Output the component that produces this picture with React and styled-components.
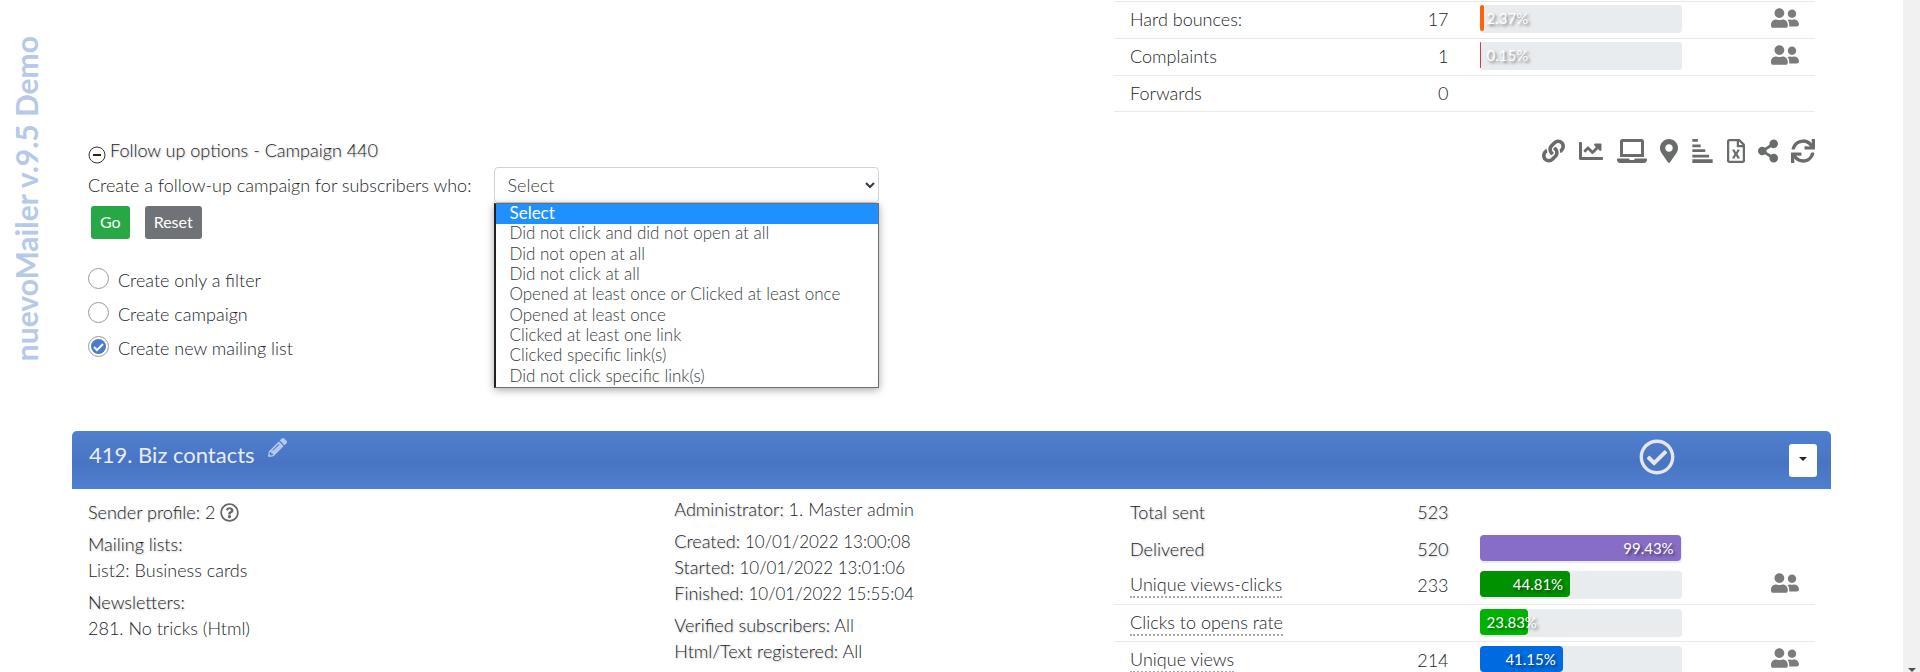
import React, { useState } from 'react';
import styled, { createGlobalStyle } from 'styled-components';
import {
  FaChartLine,
  FaLaptop,
  FaLink,
  FaMapMarkerAlt,
  FaPencilAlt,
  FaRegCheckCircle,
  FaRegFileExcel,
  FaRegQuestionCircle,
  FaShareAlt,
  FaSync,
  FaUserFriends,
} from 'react-icons/fa';

const FOLLOW_UP_OPTIONS = [
  'Select',
  'Did not click and did not open at all',
  'Did not open at all',
  'Did not click at all',
  'Opened at least once or Clicked at least once',
  'Opened at least once',
  'Clicked at least one link',
  'Clicked specific link(s)',
  'Did not click specific link(s)',
];

const CREATE_OPTIONS = ['Create only a filter', 'Create campaign', 'Create new mailing list'];

const BOUNCE_ROWS = [
  { label: 'Hard bounces:', count: 17, rate: 2.37, color: '#ff6209', users: true },
  { label: 'Complaints', count: 1, rate: 0.15, color: '#dc3545', users: true },
  { label: 'Forwards', count: 0 },
];

const BIZ_ROWS = [
  { label: 'Total sent', count: 523, shadow: true, plain: true },
  { label: 'Delivered', count: 520, shadow: true, plain: true, rate: 99.43, color: '#886dc6' },
  { label: 'Unique views-clicks', count: 233, hint: true, rate: 44.81, color: '#009100', users: true },
  { label: 'Clicks to opens rate', hint: true, rate: 23.83, color: '#00b300' },
  { label: 'Unique views', count: 214, hint: true, rate: 41.15, color: '#006be0', users: true },
];

function StepsIcon() {
  return (
    <svg viewBox="0 0 22 26" fill="currentColor">
      <path d="M0 0h6v3H0zM0 6h9v3H0zM0 11h14v3H0zM0 17h18v3H0zM0 22h22v4H0z" />
    </svg>
  );
}

const TOOLS = [
  { name: 'Links', icon: <FaLink />, width: 23 },
  { name: 'Chart', icon: <FaChartLine />, width: 26 },
  { name: 'Devices', icon: <FaLaptop />, width: 30 },
  { name: 'Locations', icon: <FaMapMarkerAlt />, width: 18 },
  { name: 'Breakdown', icon: <StepsIcon />, width: 23 },
  { name: 'Export', icon: <FaRegFileExcel />, width: 18 },
  { name: 'Share', icon: <FaShareAlt />, width: 20 },
  { name: 'Refresh', icon: <FaSync />, width: 24 },
];

function StatsTable({ rows, roomy }) {
  return (
    <Table $roomy={roomy}>
      <colgroup>
        <col width="34%" />
        <col width="16%" />
        <col width="33%" />
        <col width="17%" />
      </colgroup>
      <tbody>
        {rows.map((row) => (
          <Row key={row.label} $plain={row.plain} $shadow={row.shadow}>
            <td>{row.hint ? <Hint>{row.label}</Hint> : row.label}</td>
            <CountCell>{row.count}</CountCell>
            <BarCell>
              {row.rate !== undefined && (
                <Track>
                  <Fill $color={row.color} style={{ width: `${row.rate}%` }}>
                    <span>{`${row.rate}%`}</span>
                  </Fill>
                </Track>
              )}
            </BarCell>
            <UsersCell>
              {row.users && (
                <IconButton type="button" aria-label={`${row.label} subscribers`} $width={28} $color="#7b7b7b">
                  <FaUserFriends />
                </IconButton>
              )}
            </UsersCell>
          </Row>
        ))}
      </tbody>
    </Table>
  );
}

function FollowUp() {
  const [choice, setChoice] = useState('Select');
  const [create, setCreate] = useState('Create new mailing list');

  return (
    <FollowUpForm onSubmit={(e) => e.preventDefault()}>
      <SectionTitle>
        <CollapseButton type="button" aria-label="Collapse">
          <svg viewBox="0 0 18 18">
            <circle cx="9" cy="9" r="8" fill="none" stroke="#333" strokeWidth="1" />
            <path d="M5 9h8" stroke="#222" strokeWidth="2" />
          </svg>
        </CollapseButton>
        <Shaded>Follow up options - Campaign 440</Shaded>
      </SectionTitle>
      <SelectRow>
        <label htmlFor="followup">Create a follow-up campaign for subscribers who:</label>
        <SelectWrapper>
          <Select id="followup" value={choice} onChange={(e) => setChoice(e.target.value)}>
            {FOLLOW_UP_OPTIONS.map((option) => (
              <option key={option}>{option}</option>
            ))}
          </Select>
          <OptionList role="listbox">
            {FOLLOW_UP_OPTIONS.map((option) => (
              <Option
                key={option}
                role="option"
                aria-selected={option === choice}
                $active={option === choice}
                onClick={() => setChoice(option)}
              >
                {option}
              </Option>
            ))}
          </OptionList>
        </SelectWrapper>
      </SelectRow>
      <Buttons>
        <Button type="submit" $color="#28a745">Go</Button>
        <Button type="reset" $color="#6f7378">Reset</Button>
      </Buttons>
      <RadioGroup>
        {CREATE_OPTIONS.map((option) => (
          <RadioLabel key={option}>
            <RadioMark>
              <Radio
                type="radio"
                name="create"
                checked={create === option}
                onChange={() => setCreate(option)}
              />
              {create === option && (
                <svg viewBox="0 0 21 21">
                  <path d="M6 11l3 3 6-6" fill="none" stroke="#fff" strokeWidth="2" />
                </svg>
              )}
            </RadioMark>
            <span>{option}</span>
          </RadioLabel>
        ))}
      </RadioGroup>
    </FollowUpForm>
  );
}

export default function App() {
  return (
    <Page>
      <GlobalStyle />
      <Side>
        <Brand>nuevoMailer v.9.5 Demo</Brand>
      </Side>
      <Main>
        <FirstCampaign>
          <BouncesArea>
            <StatsTable rows={BOUNCE_ROWS} />
          </BouncesArea>
          <FollowUpArea>
            <FollowUp />
          </FollowUpArea>
          <ToolArea>
            {TOOLS.map((tool) => (
              <IconButton key={tool.name} type="button" aria-label={tool.name} $width={tool.width} $color="#6a6c6c">
                {tool.icon}
              </IconButton>
            ))}
          </ToolArea>
        </FirstCampaign>

        <CardHeader>
          <CardTitle>419. Biz contacts</CardTitle>
          <EditButton type="button" aria-label="Edit name">
            <FaPencilAlt />
          </EditButton>
          <Status>
            <FaRegCheckCircle />
          </Status>
          <MenuButton type="button" aria-label="Campaign menu" />
        </CardHeader>

        <CardBody>
          <Details $top={10}>
            <p>
              <Shaded>Sender profile:</Shaded> 2 <FaRegQuestionCircle />
            </p>
            <p>
              <Shaded>Mailing lists:</Shaded>
              <br />
              List2: Business cards
            </p>
            <p>
              <Shaded>Newsletters:</Shaded>
              <br />
              281. No tricks (Html)
            </p>
          </Details>
          <Details $top={7}>
            <p>
              <Shaded>Administrator:</Shaded> 1. Master admin
            </p>
            <p>
              <Shaded>Created:</Shaded> <DateText>10/01/2022 13:00:08</DateText>
              <br />
              <Shaded>Started:</Shaded> <DateText>10/01/2022 13:01:06</DateText>
              <br />
              <Shaded>Finished:</Shaded> <DateText>10/01/2022 15:55:04</DateText>
            </p>
            <p>
              <Shaded>Verified subscribers:</Shaded> All
              <br />
              <Shaded>Html/Text registered:</Shaded> All
            </p>
          </Details>
          <Stats>
            <StatsTable rows={BIZ_ROWS} roomy />
          </Stats>
        </CardBody>
      </Main>
      <ScrollBar />
    </Page>
  );
}

const GlobalStyle = createGlobalStyle`
  * {
    box-sizing: border-box;
  }

  body {
    margin: 0;
    background: #fff;
    color: #212529;
    font-family: Lato, sans-serif;
    font-size: 18px;
    font-weight: 300;
    line-height: 26px;
  }

  button, select, input {
    font-family: inherit;
  }

  p, h2, ul {
    margin: 0;
    padding: 0;
  }
`;

const Page = styled.div`
  display: grid;
  grid-template-columns: 72px minmax(0, 1fr) 72px 17px;
  height: 100vh;
  overflow: hidden;
`;

const Side = styled.aside`
  display: flex;
  align-items: flex-start;
  padding: 36px 0 0 8px;
`;

const Brand = styled.div`
  writing-mode: vertical-rl;
  transform: rotate(180deg);
  color: #b7c9e8;
  font-size: 30px;
  font-weight: 700;
  line-height: 36px;
  white-space: nowrap;
`;

const Main = styled.main`
  min-width: 0;
`;

const ScrollBar = styled.div`
  grid-column: 4;
  display: flex;
  align-items: flex-end;
  justify-content: center;
  padding-bottom: 7px;
  background: #f1f1f1;

  &::after {
    content: '';
    border: 4px solid transparent;
    border-top-color: #505050;
    border-bottom: 0;
  }
`;

const FirstCampaign = styled.section`
  display: grid;
  grid-template-columns: 7fr 5fr;
  grid-template-areas:
    '. bounces'
    'follow tools';
  grid-template-rows: 131px 300px;
`;

const BouncesArea = styled.div`
  grid-area: bounces;
  padding: 1px 16px 0;
`;

const FollowUpArea = styled.div`
  grid-area: follow;
  padding: 6px 16px;
`;

const ToolArea = styled.div`
  grid-area: tools;
  display: flex;
  align-items: flex-start;
  justify-content: flex-end;
  gap: 13px;
  padding: 8px 16px;
`;

const IconButton = styled.button`
  display: inline-flex;
  padding: 0;
  border: 0;
  background: none;
  color: ${({ $color }) => $color};
  cursor: pointer;

  svg {
    width: ${({ $width }) => $width}px;
    height: 24px;
  }
`;

const FollowUpForm = styled.form`
  display: flex;
  flex-direction: column;
`;

const SectionTitle = styled.div`
  display: flex;
  align-items: flex-start;
  gap: 4px;
  height: 30px;
`;

const CollapseButton = styled.button`
  display: flex;
  align-self: flex-end;
  padding: 0 0 3px;
  border: 0;
  background: none;

  svg {
    width: 18px;
    height: 18px;
  }
`;

const Shaded = styled.span`
  text-shadow: 1px 1px 2px #bbb;
`;

const DateText = styled.span`
  font-size: 17px;
  line-height: 20px;
`;

const SelectRow = styled.div`
  display: flex;
  align-items: center;
  gap: 23px;
`;

const SelectWrapper = styled.div`
  position: relative;
  width: 385px;
`;

const Select = styled.select`
  display: block;
  width: 100%;
  height: 36px;
  padding: 0 8px;
  border: 1px solid #ced4da;
  border-radius: 4px;
  background: #fff;
  color: #343a40;
  font-size: 18px;
  font-weight: 300;
`;

const OptionList = styled.ul`
  position: absolute;
  top: 100%;
  left: 0;
  right: 0;
  display: grid;
  grid-auto-rows: 1fr;
  height: 185px;
  border: 1px solid #6b6e72;
  border-left: 2px solid #222;
  background: #fff;
  box-shadow: 0 2px 8px rgba(0, 0, 0, 0.35);
  list-style: none;
`;

const Option = styled.li`
  padding-left: 13px;
  background: ${({ $active }) => ($active ? '#1e90ff' : '#fff')};
  color: ${({ $active }) => ($active ? '#fff' : '#343a40')};
  font-size: 17px;
  font-weight: ${({ $active }) => ($active ? 400 : 300)};
  line-height: 18px;
`;

const Buttons = styled.div`
  display: flex;
  gap: 15px;
  padding: 3px;
`;

const Button = styled.button`
  height: 33px;
  padding: 0 9px 2px;
  border: 0;
  border-radius: 3px;
  background: ${({ $color }) => $color};
  color: #fff;
  font-size: 16px;
`;

const RadioGroup = styled.div`
  display: flex;
  flex-direction: column;
  gap: 9px;
  padding-top: 26px;
`;

const RadioLabel = styled.label`
  display: flex;
  align-items: flex-end;
  gap: 9px;
  height: 25px;
`;

const RadioMark = styled.span`
  position: relative;
  align-self: flex-start;
  width: 21px;
  height: 21px;

  svg {
    position: absolute;
    inset: 0;
    pointer-events: none;
  }
`;

const Radio = styled.input`
  display: block;
  appearance: none;
  width: 21px;
  height: 21px;
  margin: 0;
  padding: 2px;
  border: 1px solid #999;
  border-radius: 50%;
  background: #fff content-box;

  &:checked {
    background-color: #4a7bd0;
  }
`;

const CardHeader = styled.header`
  display: flex;
  align-items: flex-start;
  height: 58px;
  padding: 0 14px 0 17px;
  border-radius: 5px 5px 0 0;
  background: linear-gradient(#5080d0, #4874c3 55%, #5080d0);
`;

const CardTitle = styled.h2`
  padding-top: 9px;
  color: #e8ecf4;
  font-size: 22px;
  font-weight: 400;
  line-height: 30px;
`;

const EditButton = styled.button`
  margin-left: 13px;
  padding: 7px 0 0;
  border: 0;
  background: none;
  color: #b7c9e8;
  font-size: 19px;
  line-height: 0;
`;

const Status = styled.div`
  display: flex;
  margin: 8px 114px 0 auto;
  color: #e6e6e6;
  font-size: 36px;
`;

const MenuButton = styled.button`
  display: flex;
  align-items: center;
  justify-content: center;
  width: 28px;
  height: 33px;
  margin-top: 13px;
  padding: 0 0 3px;
  border: 0;
  border-radius: 3px;
  background: #fff;

  &::after {
    content: '';
    border: 4px solid transparent;
    border-top-color: #212529;
    border-bottom: 0;
  }
`;

const CardBody = styled.section`
  display: grid;
  grid-template-columns: 4fr 3fr 5fr;
`;

const Details = styled.div`
  display: flex;
  flex-direction: column;
  gap: 6px;
  padding: ${({ $top }) => $top}px 16px 0;

  svg {
    width: 19px;
    height: 19px;
    color: #666;
    vertical-align: -3px;
  }
`;

const Stats = styled.div`
  padding: 4px 16px 0;
`;

const Table = styled.table`
  width: 100%;
  table-layout: fixed;
  border-collapse: collapse;
  border-top: ${({ $roomy }) => ($roomy ? '0' : '1px solid #e9e9e9')};

  td {
    height: ${({ $roomy }) => ($roomy ? 37 : 36)}px;
    padding: ${({ $roomy }) => ($roomy ? '4px 0' : '3px 0 5px')};
  }

  td:first-child {
    padding-left: 16px;
  }
`;

const Row = styled.tr`
  border-bottom: ${({ $plain }) => ($plain ? '0' : '1px solid #e9e9e9')};
  text-shadow: ${({ $shadow }) => ($shadow ? '1px 1px 2px #bbb' : 'none')};
`;

const Hint = styled.span`
  display: inline-block;
  border-bottom: 2px dotted #aaa;
  line-height: 24px;
  vertical-align: top;
`;

const CountCell = styled.td`
  text-align: right;

  && {
    padding-right: 16px;
  }
`;

const BarCell = styled.td`
  && {
    padding-left: 15px;
    padding-right: 14px;
  }
`;

const UsersCell = styled.td`
  text-align: right;
  line-height: 0;

  && {
    padding-right: 16px;
    padding-bottom: 8px;
  }
`;

const Track = styled.div`
  height: 28px;
  border-radius: 4px;
  background: #e9ecef;
`;

const Fill = styled.div`
  min-width: 1px;
  height: 26px;
  border-radius: 4px;
  background: ${({ $color }) => $color};
  color: #fff;
  font-size: 15px;
  font-weight: 400;
  text-align: right;
  text-shadow: 2px 2px 3px rgba(0, 0, 0, 0.5);
  white-space: nowrap;

  span {
    display: block;
    margin: 0 7px;
  }
`;
